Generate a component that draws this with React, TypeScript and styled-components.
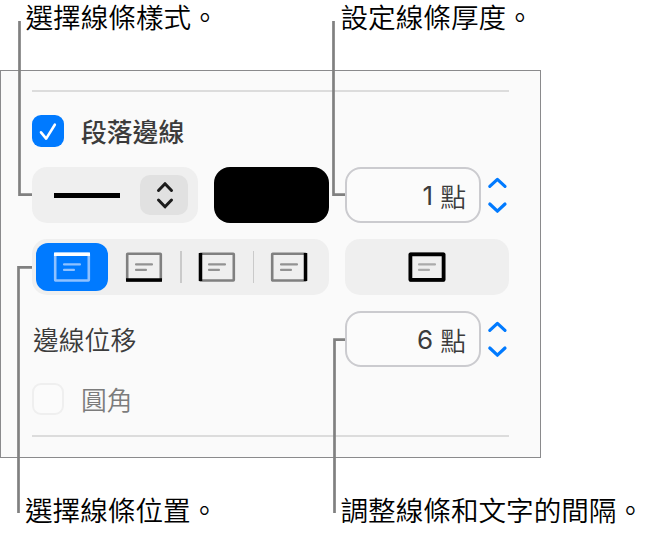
import * as React from "react";
import styled, { createGlobalStyle } from 'styled-components';

const GlobalStyle = createGlobalStyle`
  * {
    box-sizing: border-box;
  }
  body {
    margin: 0;
    background: #ffffff;
    font-family: "Liberation Sans", "Noto Sans CJK TC", sans-serif;
  }
  button {
    border: none;
    padding: 0;
    font: inherit;
  }
`;

const Page = styled.div`
  position: relative;
  width: 651px;
  height: 534px;
  overflow: hidden;
`;

const CaptionRow = styled.div<{ $height: number; $top: number; $first: number; $second: number }>`
  display: grid;
  grid-template-columns: ${(p) => p.$second - p.$first}px 1fr;
  height: ${(p) => p.$height}px;
  padding: ${(p) => p.$top}px 0 0 ${(p) => p.$first}px;
`;

const Caption = styled.div`
  color: #000000;
  font-family: "Liberation Sans", "Noto Sans CJK TC", sans-serif;
  font-size: 27.6px;
  font-weight: 350;
  line-height: 38px;
  white-space: nowrap;
`;

const Panel = styled.div`
  display: flex;
  flex-direction: column;
  width: 541px;
  height: 388px;
  padding: 19px 31px 0;
  background: #fafafa;
  border: 1px solid #8a8a8c;
`;

const Rule = styled.div<{ $top?: number }>`
  flex: none;
  height: 2px;
  margin-top: ${(p) => p.$top || 0}px;
  background: #dcdcdc;
`;

const CheckRow = styled.label<{ $top: number }>`
  display: flex;
  align-items: center;
  gap: 17px;
  height: 32px;
  margin-top: ${(p) => p.$top}px;
`;

const Checkbox = styled.span<{ $checked?: boolean }>`
  display: flex;
  width: 32px;
  height: 32px;
  border-radius: 9px;
  background: ${(p) => (p.$checked ? '#007aff' : '#fbfbfb')};
  border: ${(p) => (p.$checked ? 'none' : '2px solid #efefef')};
`;

const Label = styled.span<{ $weight?: number; $color?: string; $indent?: number }>`
  padding-left: ${(p) => p.$indent || 0}px;
  color: ${(p) => p.$color || '#3c3c3c'};
  font-family: "Noto Sans CJK TC", sans-serif;
  font-size: 25.8px;
  font-weight: ${(p) => p.$weight || 350};
  line-height: 32px;
  white-space: nowrap;
`;

const Row = styled.div<{ $top: number }>`
  display: grid;
  grid-template-columns: 297px 164px;
  column-gap: 16px;
  height: 56px;
  margin-top: ${(p) => p.$top}px;
  align-items: center;
`;

const StyleGroup = styled.div`
  display: flex;
  gap: 16px;
`;

const LineStyle = styled.button`
  display: flex;
  align-items: center;
  justify-content: space-between;
  width: 166px;
  height: 56px;
  padding: 0 10px 0 22px;
  border-radius: 15px;
  background: #efefef;
`;

const LineSample = styled.span`
  width: 66px;
  height: 5px;
  background: #000000;
`;

const PopupArrows = styled.span`
  display: flex;
  width: 48px;
  height: 40px;
  border-radius: 10px;
  background: #e1e1e1;
`;

const ColorWell = styled.button`
  width: 115px;
  height: 56px;
  border-radius: 16px;
  background: #000000;
`;

const FieldGroup = styled.div`
  display: flex;
  align-items: center;
  gap: 6px;
`;

const Field = styled.div`
  display: flex;
  align-items: center;
  justify-content: flex-end;
  gap: 7px;
  width: 136px;
  height: 56px;
  padding: 2px 13px 0 0;
  border: 2px solid #cbcbcf;
  border-radius: 16px;
  background: #fbfbfb;
`;

const Value = styled.span`
  color: #3c3c3c;
  font-family: Inter, "Liberation Sans", sans-serif;
  font-size: 26px;
  line-height: 32px;
`;

const StepperIcon = styled.svg`
  width: 22px;
  height: 40px;
  fill: none;
  stroke: #007aff;
  stroke-width: 3.2;
  stroke-linecap: round;
  stroke-linejoin: round;
`;

const Segments = styled.div`
  display: flex;
  align-items: center;
  height: 56px;
  padding: 4px;
  border-radius: 15px;
  background: #efefef;
`;

const Segment = styled.button<{ $active?: boolean; $wide?: boolean }>`
  display: flex;
  flex: none;
  align-items: center;
  justify-content: center;
  width: ${(p) => (p.$wide ? '100%' : '72px')};
  height: 48px;
  border-radius: 12px;
  background: ${(p) => (p.$active ? '#007aff' : 'transparent')};
`;

const Divider = styled.span`
  flex: none;
  width: 1.5px;
  height: 32px;
  margin-right: -1px;
  background: #cacaca;
`;

type Side = 'top' | 'bottom' | 'left' | 'right' | 'all';

const sidePaths = {
  top: 'M1 3.2H37',
  bottom: 'M1 28.9H37',
  left: 'M2.5 2V30',
  right: 'M35.5 2V30',
  all: 'M2.4 3.3H35.6V28.8H2.4Z',
};

const BorderIcon = ({ side, active }: { side: Side; active?: boolean }) => (
  <svg width="38" height="32" viewBox="0 0 38 32" fill="none">
    <rect x="2.2" y="2.7" width="33.6" height="26.8" rx="0.5" stroke={active ? '#8fc1ff' : '#808080'} strokeWidth="2.6" />
    <path
      d="M11 13.4H27M11 18.9H21"
      stroke={active ? '#8fc1ff' : side === 'all' ? '#ababab' : '#929292'}
      strokeWidth="2.1"
      strokeLinecap="round"
    />
    <path d={sidePaths[side]} stroke={active ? '#ffffff' : '#000000'} strokeWidth={side === 'all' ? 3.8 : 3.5} strokeLinejoin="round" />
  </svg>
);

const Stepper = () => (
  <StepperIcon viewBox="0 0 22 40">
    <path d="M2.8 11.4L10.4 4.4L18 11.4M2.8 29L10.4 36.2L18 29" />
  </StepperIcon>
);

// lines running from each caption to its control
const Leaders = styled.svg`
  position: absolute;
  left: 0;
  top: 0;
  pointer-events: none;
  fill: none;
  stroke: #808080;
  stroke-width: 2.7;
`;

const App = (): React.ReactElement => {
  return (
    <Page>
      <GlobalStyle />

      <CaptionRow $height={70} $top={0} $first={25.5} $second={340.5}>
        <Caption>選擇線條樣式。</Caption>
        <Caption>設定線條厚度。</Caption>
      </CaptionRow>

      <Panel>
        <Rule />
        <CheckRow $top={23}>
          <Checkbox $checked>
            <svg width="32" height="32" viewBox="0 0 32 32" fill="none">
              <path d="M9 17.3L14.2 23.6L22.8 9.7" stroke="#ffffff" strokeWidth="2.6" strokeLinecap="round" strokeLinejoin="round" />
            </svg>
          </Checkbox>
          <Label $weight={500}>段落邊線</Label>
        </CheckRow>

        <Row $top={20}>
          <StyleGroup>
            <LineStyle>
              <LineSample />
              <PopupArrows>
                <svg width="48" height="40" viewBox="0 0 48 40" fill="none">
                  <path d="M18.5 15.5L25 8.7L31.5 15.5M18.5 25L25 31.8L31.5 25" stroke="#1c1c1c" strokeWidth="3" strokeLinecap="round" strokeLinejoin="round" />
                </svg>
              </PopupArrows>
            </LineStyle>
            <ColorWell />
          </StyleGroup>
          <FieldGroup>
            <Field>
              <Value>1</Value>
              <Label>點</Label>
            </Field>
            <Stepper />
          </FieldGroup>
        </Row>

        <Row $top={16}>
          <Segments>
            <Segment $active><BorderIcon side="top" active /></Segment>
            <Segment><BorderIcon side="bottom" /></Segment>
            <Divider />
            <Segment><BorderIcon side="left" /></Segment>
            <Divider />
            <Segment><BorderIcon side="right" /></Segment>
          </Segments>
          <Segments>
            <Segment $wide><BorderIcon side="all" /></Segment>
          </Segments>
        </Row>

        <Row $top={16}>
          <Label $indent={1}>邊線位移</Label>
          <FieldGroup>
            <Field>
              <Value>6</Value>
              <Label>點</Label>
            </Field>
            <Stepper />
          </FieldGroup>
        </Row>

        <CheckRow $top={16}>
          <Checkbox />
          <Label $color="#7c7c7c">圓角</Label>
        </CheckRow>
        <Rule $top={20} />
      </Panel>

      <CaptionRow $height={76} $top={35} $first={25} $second={340.5}>
        <Caption>選擇線條位置。</Caption>
        <Caption>調整線條和文字的間隔。</Caption>
      </CaptionRow>

      <Leaders width="651" height="534" viewBox="0 0 651 534">
        <path d="M19.5 21V194.7H32" />
        <path d="M333.5 21V194.7H345" />
        <path d="M18.5 513V267.3H32" />
        <path d="M334.5 513V339.6H345" />
      </Leaders>
    </Page>
  );
};

export default App;
